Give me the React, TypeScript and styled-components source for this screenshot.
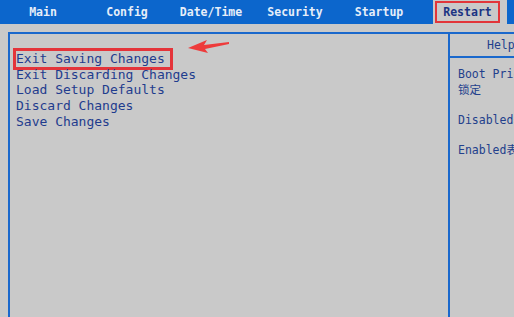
import styled, { createGlobalStyle } from 'styled-components';

const GlobalStyle = createGlobalStyle`
  html, body {
    margin: 0;
    padding: 0;
    height: 100%;
    overflow: hidden;
    background: #c9c9c9;
  }
  #root {
    height: 100%;
  }
  * {
    box-sizing: border-box;
  }
`;

const mono = `"DejaVu Sans Mono", "Liberation Mono", "Noto Sans CJK SC", monospace`;

const Screen = styled.div`
  position: relative;
  display: flex;
  flex-direction: column;
  height: 100vh;
  background: #c9c9c9;
  font-family: ${mono};
`;

const TabBar = styled.nav`
  display: flex;
  align-items: stretch;
  height: 24px;
  padding-left: 1px;
  background: #0c66cc;
`;

const Tab = styled.div`
  width: 84px;
  display: flex;
  align-items: center;
  justify-content: center;
  font-size: 11.5px;
  font-weight: bold;
  color: #e6eef9;
`;

const ActiveTab = styled.div`
  width: 74px;
  margin-left: 12px;
  display: flex;
  align-items: center;
  padding-left: 2px;
  background: #c9c9c9;
`;

const Marked = styled.div`
  width: 65px;
  height: 22px;
  border: 2px solid #e2353a;
  display: flex;
  align-items: center;
  justify-content: center;
  font-size: 11.5px;
  font-weight: bold;
  color: #1b3383;
`;

const Frame = styled.div`
  flex: 1;
  display: flex;
  margin: 8px 0 0 8px;
  border-top: 2px solid #1a68cc;
  border-left: 2px solid #1a68cc;
`;

const MenuPanel = styled.section`
  flex: 0 0 438px;
  display: flex;
  flex-direction: column;
  align-items: flex-start;
  padding: 17px 0 0 6px;
`;

const MenuItem = styled.div<{ $marked?: boolean }>`
  font-size: 13px;
  line-height: 15.7px;
  color: #1f3c8e;
  padding-right: ${(p) => (p.$marked ? '5px' : '0')};
  outline: ${(p) => (p.$marked ? '3px solid #e4343a' : 'none')};
  white-space: nowrap;
`;

const HelpPanel = styled.aside`
  flex: 0 0 200px;
  border-left: 2px solid #1a68cc;
  display: flex;
  flex-direction: column;
`;

const HelpTitle = styled.div`
  height: 24px;
  display: flex;
  align-items: center;
  padding-left: 37px;
  border-bottom: 2px solid #1a68cc;
  font-size: 11.5px;
  color: #23408c;
`;

const HelpBody = styled.div`
  padding: 9px 0 0 8px;
  font-size: 11.5px;
  line-height: 15.5px;
  color: #23408c;
`;

const HelpPara = styled.p`
  margin: 0 0 14.5px;
  white-space: nowrap;
`;

const Arrow = styled.svg`
  position: absolute;
  left: 187px;
  top: 38px;
`;

const tabs = ['Main', 'Config', 'Date/Time', 'Security', 'Startup'];
const items = [
  'Exit Saving Changes',
  'Exit Discarding Changes',
  'Load Setup Defaults',
  'Discard Changes',
  'Save Changes',
];

export default function App() {
  return (
    <>
      <GlobalStyle />
      <Screen>
        <TabBar>
          {tabs.map((t) => (
            <Tab key={t}>{t}</Tab>
          ))}
          <ActiveTab>
            <Marked>Restart</Marked>
          </ActiveTab>
        </TabBar>
        <Frame>
          <MenuPanel>
            {items.map((item, i) => (
              <MenuItem key={item} $marked={i === 0}>
                {item}
              </MenuItem>
            ))}
          </MenuPanel>
          <HelpPanel>
            <HelpTitle>Help</HelpTitle>
            <HelpBody>
              <HelpPara>
                Boot Priority Order
                <br />
                锁定
              </HelpPara>
              <HelpPara>Disabled表示关闭</HelpPara>
              <HelpPara>Enabled表示开启</HelpPara>
            </HelpBody>
          </HelpPanel>
        </Frame>
        <Arrow width="44" height="16" viewBox="0 0 44 16">
          <path
            d="M1 10 L20 2 L17 7 L42 4 L42 6 L18 11 L21 15 Z"
            fill="#ee3b3b"
          />
        </Arrow>
      </Screen>
    </>
  );
}
